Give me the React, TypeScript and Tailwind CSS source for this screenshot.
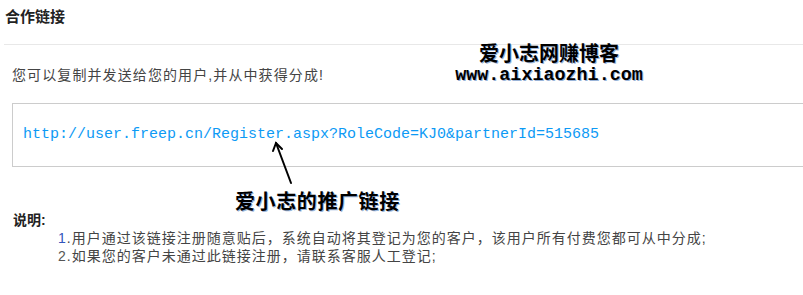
const cjk = "font-['Liberation_Sans','Noto_Sans_CJK_SC',sans-serif]"

export default function App() {
  return (
    <div className={`relative w-[803px] h-[295px] overflow-hidden bg-white text-[#333] ${cjk}`}>
      {/* header */}
      <div className="ml-[4px] h-[45px] border-b border-[#e8e8e8] pl-[1px] pt-[7px]">
        <h2 className="text-[15px] font-bold leading-[20px] text-[#222]">合作链接</h2>
      </div>

      <p className="ml-[12px] mt-[20px] text-[14px] leading-[20px] tracking-[1.1px] text-[#444]">
        您可以复制并发送给您的用户,并从中获得分成!
      </p>

      {/* link box */}
      <div className="ml-[12px] mt-[18px] flex h-[64px] items-center border border-r-0 border-[#cccccc] pl-[10px]">
        <span className="font-['Liberation_Mono',monospace] text-[15px] leading-[20px] text-[#0d9af5]">
          http://user.freep.cn/Register.aspx?RoleCode=KJ0&amp;partnerId=515685
        </span>
      </div>

      {/* notes */}
      <div className="ml-[13px] mt-[44px]">
        <div className="text-[14px] font-bold leading-[18px] text-[#222]">说明:</div>
        <ol className="ml-[45px] text-[14px] leading-[18px] tracking-[1px] text-[#444]">
          <li>
            <span className="text-[#3355bb]">1</span>.用户通过该链接注册随意贴后，系统自动将其登记为您的客户，该用户所有付费您都可从中分成;
          </li>
          <li>
            <span className="text-[#555]">2</span>.如果您的客户未通过此链接注册，请联系客服人工登记;
          </li>
        </ol>
      </div>

      {/* watermark annotation */}
      <div className="absolute left-[454px] top-[43px] w-[190px] text-center">
        <div className="text-[20px] font-bold leading-[23px] text-black [text-shadow:1px_1px_0_#9ab4d8]">
          爱小志网赚博客
        </div>
        <div className="font-['Liberation_Mono',monospace] text-[18.4px] font-bold leading-[19px] text-black [text-shadow:1px_1px_0_#9ab4d8]">
          www.aixiaozhi.com
        </div>
      </div>

      {/* arrow annotation */}
      <svg className="absolute left-0 top-0" width="803" height="295" viewBox="0 0 803 295">
        <g stroke="#000" strokeWidth="2" fill="none" strokeLinecap="round">
          <line x1="291" y1="183" x2="276" y2="143" />
          <polyline points="273,151 276,143 282,149" />
        </g>
      </svg>
      <div className="absolute left-[235px] top-[190px] text-[20px] font-bold leading-[24px] tracking-[0.6px] text-black [text-shadow:1px_1px_0_#9ab4d8]">
        爱小志的推广链接
      </div>
    </div>
  )
}
